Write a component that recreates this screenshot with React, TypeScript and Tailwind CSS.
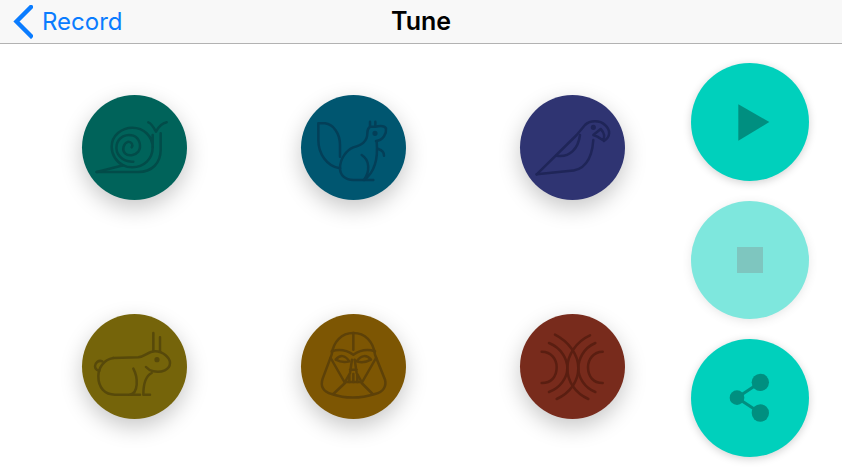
import React from "react";

const strokeProps = {
  fill: "none",
  stroke: "currentColor",
  strokeWidth: 7.5,
  strokeLinecap: "round" as const,
  strokeLinejoin: "round" as const,
};

function Snail() {
  return (
    <svg viewBox="36 30 315 315" className="w-full h-full" {...strokeProps}>
      <path d="M80 261 L205 261 C245 261 272 235 272 195 L272 145" />
      <path d="M80 261 L160 241 C140 232 125 210 125 185 C125 152 155 128 187 128 C222 128 248 155 248 187 L248 150" />
      <path d="M248 187 C248 222 222 247 187 247 C177 247 167 245 160 241" />
      <path d="M190 230 C155 232 135 205 140 180 C145 155 170 145 190 152 C210 160 215 185 205 200 C195 212 175 215 165 205 C155 195 160 175 175 170 C185 170 190 180 185 187" />
      <path d="M235 112 C245 115 250 125 258 140 C266 125 275 115 290 112" />
    </svg>
  );
}

function Squirrel() {
  return (
    <svg viewBox="33 30 315 315" className="w-full h-full" {...strokeProps}>
      <path d="M150 250 C110 245 85 205 85 165 L85 115 L105 115 C130 118 150 145 150 180 L150 215" />
      <path d="M150 250 C150 220 170 195 190 187 C215 180 232 170 232 145 C232 135 236 128 240 125 L240 110 M240 125 L256 125 L256 110 M256 125 C270 122 284 122 288 130 C290 145 280 165 258 168" />
      <path d="M260 170 C265 225 250 265 222 285 L250 285 M222 285 L190 285 C165 285 150 270 150 250" />
      <path d="M215 210 C240 225 240 260 222 285" />
      <path d="M265 192 C275 195 282 202 282 212" />
      <circle cx="255" cy="145" r="4" fill="currentColor" />
    </svg>
  );
}

function Parrot() {
  return (
    <svg viewBox="30 30 315 315" className="w-full h-full" {...strokeProps}>
      <path d="M80 268 L200 150 L225 120 C240 105 270 105 285 120 C302 135 302 155 282 168" />
      <path d="M80 268 L175 258 C215 258 245 235 250 165" />
      <path d="M140 212 C180 218 205 190 210 150" />
      <path d="M250 150 L272 132 C285 145 285 158 278 165 L262 155 Z" />
      <circle cx="250" cy="127" r="4" fill="currentColor" />
    </svg>
  );
}

function Rabbit() {
  return (
    <svg viewBox="36 28 315 315" className="w-full h-full" {...strokeProps}>
      <path d="M250 85 L250 138 M270 98 L270 140" />
      <path d="M130 160 L205 158 C225 155 235 140 255 140 C280 140 300 160 300 175 C300 195 275 205 250 200 C240 198 235 195 228 187" />
      <path d="M130 160 C100 165 85 190 85 215 C85 250 105 270 135 270 L210 270" />
      <path d="M97 170 C85 165 75 175 75 185 C75 195 85 198 88 198" />
      <path d="M180 270 C205 265 205 220 190 192" />
      <path d="M245 205 C225 215 220 245 220 270 L240 270" />
      <circle cx="261" cy="165" r="4" fill="currentColor" />
    </svg>
  );
}

function Vader() {
  return (
    <svg viewBox="33 28 315 315" className="w-full h-full" {...strokeProps}>
      <path d="M125 150 C130 110 155 85 190 85 C225 85 250 110 255 150 L285 225 C290 245 280 262 255 268 C210 282 165 282 125 268 C100 262 90 245 98 222 Z" />
      <path d="M190 85 L190 135" />
      <path d="M125 140 C150 132 172 138 190 150 C208 138 230 132 255 140" />
      <path d="M137 165 C150 150 165 150 178 170 C160 175 150 172 137 165 Z" />
      <path d="M200 170 C215 150 230 150 243 165 C230 172 215 175 200 170 Z" />
      <path d="M122 160 L165 235 L130 268 M258 160 L215 235 L248 268" />
      <path d="M165 232 L215 232 M165 232 L180 205 L186 165 M215 232 L200 205 L194 165 M180 195 L200 195" />
      <path d="M178 212 L178 232 M190 208 L190 232 M202 212 L202 232" />
    </svg>
  );
}

function Waves() {
  return (
    <svg viewBox="30 28 315 315" className="w-full h-full" {...strokeProps}>
      <path d="M95 141 C125 141 140 165 140 188 C140 215 125 235 95 235" />
      <path d="M117 115 C155 130 172 165 172 190 C172 220 150 250 117 262" />
      <path d="M135 90 C175 110 205 150 205 190 C205 230 180 265 140 283" />
      <path d="M278 141 C250 141 234 165 234 188 C234 215 250 235 278 235" />
      <path d="M256 115 C220 130 205 165 205 190 C205 220 225 250 256 262" />
      <path d="M240 92 C200 110 172 150 172 190 C172 230 195 265 235 283" />
    </svg>
  );
}

const tunes = [
  { bg: "bg-[#00635a]", fg: "text-[#024c49]", Icon: Snail },
  { bg: "bg-[#005670]", fg: "text-[#033f58]", Icon: Squirrel },
  { bg: "bg-[#2f3472]", fg: "text-[#1f2558]", Icon: Parrot },
  { bg: "bg-[#75640a]", fg: "text-[#57490a]", Icon: Rabbit },
  { bg: "bg-[#7d5603]", fg: "text-[#5d4108]", Icon: Vader },
  { bg: "bg-[#782b1c]", fg: "text-[#5a1e11]", Icon: Waves },
];

function ActionButton({ children, faded }: { children: React.ReactNode; faded?: boolean }) {
  return (
    <button
      className={
        "w-[118px] h-[118px] rounded-full bg-[#00d0bc] flex items-center justify-center shadow-[0_2px_8px_rgba(0,0,0,0.18)] " +
        (faded ? "opacity-50" : "")
      }
    >
      {children}
    </button>
  );
}

export default function App() {
  return (
    <div className="w-[842px] h-[469px] bg-white overflow-hidden font-['Inter','Liberation_Sans',sans-serif]">
      <header className="h-[44px] bg-[#f8f8f8] border-b border-[#b2b2b2] grid grid-cols-[1fr_auto_1fr] items-center">
        <div className="flex items-center pl-[13px] gap-[9px] text-[#0a7cff]">
          <svg width="20" height="34" viewBox="0 0 20 34" className="shrink-0">
            <path d="M18 2 L3.5 16.5 L18 31" fill="none" stroke="currentColor" strokeWidth="4.4" strokeLinecap="square" />
          </svg>
          <span className="text-[24px] leading-none">Record</span>
        </div>
        <div className="text-[25px] font-semibold text-black leading-none">Tune</div>
        <div />
      </header>
      <main className="flex">
        <div className="grid grid-cols-[repeat(3,105px)] gap-x-[114px] gap-y-[114px] pl-[82px] pt-[51px] w-[691px] content-start">
          {tunes.map(({ bg, fg, Icon }, i) => (
            <div key={i} className={`w-[105px] h-[105px] rounded-full ${bg} ${fg} shadow-[0_8px_22px_rgba(0,0,0,0.22)]`}>
              <Icon />
            </div>
          ))}
        </div>
        <div className="flex flex-col gap-[20px] pt-[18.5px]">
          <ActionButton>
            <svg viewBox="32 37 354 354" className="w-full h-full">
              <path d="M174 161 L267 214 L174 270 Z" fill="#008f80" />
            </svg>
          </ActionButton>
          <ActionButton faded>
            <div className="w-[26px] h-[26px] bg-[#008f80]" />
          </ActionButton>
          <ActionButton>
            <svg viewBox="32 28 354 354" className="w-full h-full" fill="#008f80">
              <path d="M240 158 L170 204 L240 250" fill="none" stroke="#008f80" strokeWidth="9" />
              <circle cx="240" cy="158" r="26" />
              <circle cx="170" cy="204" r="22" />
              <circle cx="240" cy="250" r="26" />
            </svg>
          </ActionButton>
        </div>
      </main>
    </div>
  );
}
